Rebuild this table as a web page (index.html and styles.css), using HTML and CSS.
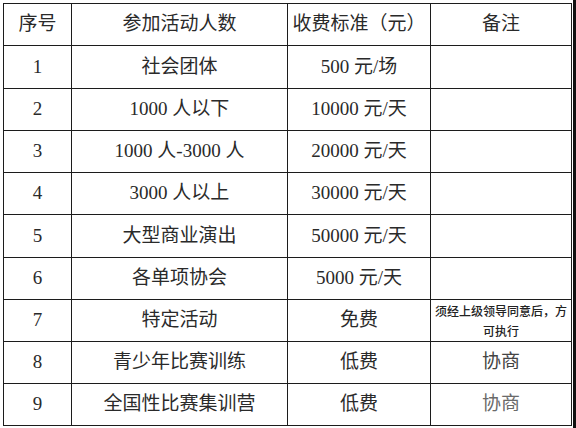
FILE: index.html
```html
<!DOCTYPE html>
<html lang="zh-CN">
<head>
<meta charset="utf-8">
<title>收费标准</title>
<link rel="stylesheet" href="styles.css">
</head>
<body>
<div class="page">
  <div class="sheet">
    <div class="grid">
      <div class="cell">序号</div>
      <div class="cell">参加活动人数</div>
      <div class="cell">收费标准（元）</div>
      <div class="cell">备注</div>

      <div class="cell">1</div>
      <div class="cell">社会团体</div>
      <div class="cell">500 元/场</div>
      <div class="cell"></div>

      <div class="cell">2</div>
      <div class="cell">1000 人以下</div>
      <div class="cell">10000 元/天</div>
      <div class="cell"></div>

      <div class="cell">3</div>
      <div class="cell">1000 人-3000 人</div>
      <div class="cell">20000 元/天</div>
      <div class="cell"></div>

      <div class="cell">4</div>
      <div class="cell">3000 人以上</div>
      <div class="cell">30000 元/天</div>
      <div class="cell"></div>

      <div class="cell">5</div>
      <div class="cell">大型商业演出</div>
      <div class="cell">50000 元/天</div>
      <div class="cell"></div>

      <div class="cell">6</div>
      <div class="cell">各单项协会</div>
      <div class="cell">5000 元/天</div>
      <div class="cell"></div>

      <div class="cell">7</div>
      <div class="cell">特定活动</div>
      <div class="cell">免费</div>
      <div class="cell note">须经上级领导同意后，方<br>可执行</div>

      <div class="cell">8</div>
      <div class="cell">青少年比赛训练</div>
      <div class="cell">低费</div>
      <div class="cell soft">协商</div>

      <div class="cell">9</div>
      <div class="cell">全国性比赛集训营</div>
      <div class="cell">低费</div>
      <div class="cell softer">协商</div>
    </div>
  </div>
  <div class="edge"></div>
</div>
</body>
</html>
```

FILE: styles.css
```css
html, body {
  margin: 0;
  padding: 0;
  background: #fff;
}

.page {
  display: flex;
  width: 576px;
  height: 428px;
  overflow: hidden;
}

.sheet {
  flex: 1;
  padding: 3px 0 0 3px;
}

.grid {
  display: grid;
  grid-template-columns: 67px 215px 142px 140px;
  grid-template-rows: 41px 42px 41px 41px 41px 42px 41px 41px 41px 41px;
  gap: 1px;
  padding: 1px;
  background: #1c1c1c;
  width: max-content;
}

.cell {
  background: #fff;
  display: flex;
  align-items: center;
  justify-content: center;
  text-align: center;
  font-family: "Liberation Serif", "Noto Sans CJK SC", serif;
  font-size: 19px;
  line-height: 1.2;
  color: #2a2a2a;
  white-space: nowrap;
}

.note {
  font-family: "Noto Sans CJK SC", sans-serif;
  font-size: 12px;
  font-weight: 500;
  line-height: 20px;
  color: #222;
}

.soft {
  color: #444;
}

.softer {
  color: #6a6a6a;
}

.edge {
  width: 3px;
  background: #111;
}
```
